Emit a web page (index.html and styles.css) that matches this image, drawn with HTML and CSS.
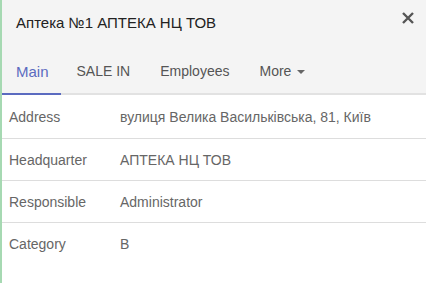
FILE: index.html
```html
<!DOCTYPE html>
<html lang="uk">
<head>
	<meta charset="UTF-8">
	<title>Аптека №1</title>
	<link rel="stylesheet" href="styles.css">
</head>
<body>
	<div class="modal">
		<div class="head">
			<div class="title">Аптека №1 АПТЕКА НЦ ТОВ</div>
			<svg class="close" width="12" height="12" viewBox="0 0 12 12"><path d="M1 1L11 11M11 1L1 11" stroke="#555" stroke-width="2.4"/></svg>
		</div>
		<div class="tabs">
			<span class="tab active">Main</span>
			<span class="tab">SALE IN</span>
			<span class="tab">Employees</span>
			<span class="tab">More <i class="caret"></i></span>
		</div>
		<div class="rows">
			<div class="row"><span class="label">Address</span><span class="value">вулиця Велика Васильківська, 81, Київ</span></div>
			<div class="row"><span class="label">Headquarter</span><span class="value">АПТЕКА НЦ ТОВ</span></div>
			<div class="row"><span class="label">Responsible</span><span class="value">Administrator</span></div>
			<div class="row last"><span class="label">Category</span><span class="value">B</span></div>
		</div>
	</div>
</body>
</html>
```
FILE: styles.css
```css
html, body { margin: 0; padding: 0; height: 100%; }
body { background: #fff; font-family: "Liberation Sans", Arial, sans-serif; border-left: 2px solid #a6d9b2; box-sizing: border-box; overflow: hidden; }
.modal { background: #fff; }
.head { background: #f4f4f4; height: 44px; display: flex; align-items: center; justify-content: space-between; padding: 0 12px 0 14px; }
.title { font-size: 15px; color: #222; }
.close { margin-top: -8px; }
.tabs { background: #f4f4f4; height: 49px; display: flex; border-bottom: 2px solid #e2e2e2; }
.tab { font-size: 14px; color: #555; padding: 4px 14px 0; display: flex; align-items: center; gap: 4px; margin-right: 2px; box-sizing: border-box; }
.tab.active { color: #5b6bc0; font-size: 15px; border-bottom: 2px solid #5b6bc0; margin-bottom: -2px; padding: 6px 12px 0 14px; }
.caret { display: inline-block; width: 0; height: 0; border-left: 4px solid transparent; border-right: 4px solid transparent; border-top: 4px solid #666; margin-left: 2px; margin-top: 2px; }
.row { display: flex; height: 41px; align-items: center; border-bottom: 1px solid #ddd; font-size: 14px; color: #666; }
.row:first-child { height: 43px; }
.row.last { border-bottom: none; }
.label { width: 111px; padding-left: 7px; }
```
